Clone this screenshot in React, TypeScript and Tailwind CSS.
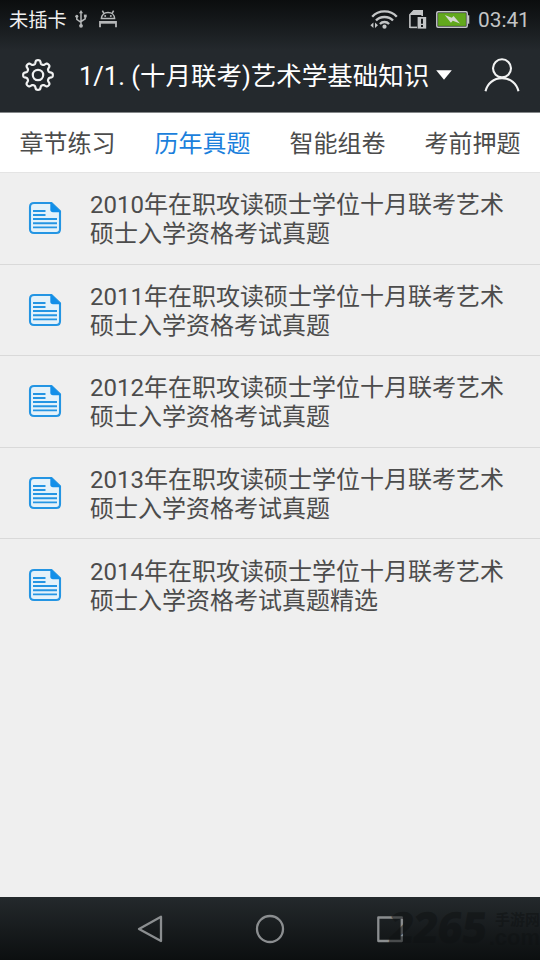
/* ── Data ──────────────────────────────────────────────────────────────── */
const TABS = ["章节练习", "历年真题", "智能组卷", "考前押题"];
const ACTIVE_TAB = "历年真题";

const PAPERS = [
  "2010年在职攻读硕士学位十月联考艺术硕士入学资格考试真题",
  "2011年在职攻读硕士学位十月联考艺术硕士入学资格考试真题",
  "2012年在职攻读硕士学位十月联考艺术硕士入学资格考试真题",
  "2013年在职攻读硕士学位十月联考艺术硕士入学资格考试真题",
  "2014年在职攻读硕士学位十月联考艺术硕士入学资格考试真题精选",
];

/* Eight soft teeth around a 32px circle */
function gearOutline(): string {
  const pts: string[] = [];
  for (let i = 0; i < 240; i++) {
    const a = (i / 240) * Math.PI * 2;
    const r = 13 + 1.9 * Math.tanh(1.9 * Math.cos(8 * a));
    pts.push(`${(16 + r * Math.cos(a)).toFixed(2)} ${(16 + r * Math.sin(a)).toFixed(2)}`);
  }
  return `M${pts.join("L")}Z`;
}

const GEAR_PATH = gearOutline();

/* ── Icons ─────────────────────────────────────────────────────────────── */
function GearIcon() {
  return (
    <svg className="size-8" viewBox="0 0 32 32" fill="none" stroke="#f1f2f2" strokeWidth="2.2">
      <path d={GEAR_PATH} strokeLinejoin="round" />
      <circle cx="16" cy="16" r="5.2" />
    </svg>
  );
}

function UserIcon() {
  return (
    <svg className="h-[34px] w-9" viewBox="0 0 36 34" fill="none" stroke="#f1f2f2" strokeWidth="2.1">
      <circle cx="18" cy="10.3" r="9" />
      <path d="M1.5 33.3C3.2 25.6 9.6 20.1 18 20.1S32.8 25.6 34.5 33.3" />
    </svg>
  );
}

function UsbIcon() {
  return (
    <svg className="h-[18px] w-3" viewBox="0 0 12 18" fill="none" stroke="#b5b7b8" strokeWidth="1.5">
      <path d="M6 2.5V15M1.8 6.5V9.3L6 12.3M10.2 6V8.8L6 11.5" />
      <path d="M6 0L8 3.2H4Z" fill="#b5b7b8" stroke="none" />
      <circle cx="6" cy="15.8" r="1.9" fill="#b5b7b8" stroke="none" />
      <circle cx="1.8" cy="6.3" r="1.5" fill="#b5b7b8" stroke="none" />
      <path d="M8.9 4.6H11.7V7.4H8.9Z" fill="#b5b7b8" stroke="none" />
    </svg>
  );
}

function AndroidIcon() {
  return (
    <svg className="h-[18px] w-[18px]" viewBox="0 0 18 18" fill="none" stroke="#b5b7b8" strokeWidth="1.5">
      <path d="M2.4 8.6C2.4 5 5.2 2.6 9 2.6S15.6 5 15.6 8.6Z" />
      <path d="M5 3.6L3.4 .6M13 3.6L14.6 .6" />
      <path d="M1 17.2V12H17V17.2" strokeWidth="1.8" />
      <path d="M1 12.8H17" strokeWidth="1.8" />
      <circle cx="6.2" cy="6.1" r="1" fill="#b5b7b8" stroke="none" />
      <circle cx="11.8" cy="6.1" r="1" fill="#b5b7b8" stroke="none" />
    </svg>
  );
}

function WifiIcon() {
  return (
    <svg className="h-[19px] w-7" viewBox="0 0 28 19" fill="none" stroke="#c3c5c6" strokeWidth="2.3">
      <path d="M2.2 6.7C8.4-.4 20.6-.4 26.8 6.7" />
      <path d="M6 10.5C10.2 5.8 18.8 5.8 23 10.5" />
      <path d="M9.9 14C12.4 11.3 16.6 11.3 19.1 14" />
      <circle cx="14.5" cy="16.7" r="2.1" fill="#c3c5c6" stroke="none" />
      <path d="M3.4 12.6V18L.4 15.3ZM5 12.6V18L8 15.3Z" fill="#c3c5c6" stroke="none" />
    </svg>
  );
}

function SimAlertIcon() {
  return (
    <svg className="h-[19px] w-[18px]" viewBox="0 0 18 19">
      <path d="M.9 18V4.8L4.7.9H13.2V6" fill="none" stroke="#c3c5c6" strokeWidth="1.6" />
      <path d="M.9 17.4H8" stroke="#c3c5c6" strokeWidth="1.6" />
      <path d="M1 4.8L4.7 1H13V5H1Z" fill="#c3c5c6" />
      <path d="M8.6 7H17.2V18.6H8.6Z" fill="#c3c5c6" />
      <path d="M12 8.8H14V13.8H12ZM12 15H14V17H12Z" fill="#171a1c" />
    </svg>
  );
}

function BatteryIcon() {
  return (
    <svg className="h-[17px] w-[34px]" viewBox="0 0 34 17">
      <rect x=".8" y=".8" width="30.4" height="15.4" rx="1.2" fill="#171a1c" stroke="#c3c5c6" strokeWidth="1.5" />
      <rect x="2.1" y="2.1" width="27.8" height="12.8" fill="#62a81d" />
      <path d="M31.5 4.3H33.3V12.7H31.5Z" fill="#c3c5c6" />
      <path d="M8.8 4L15.8 6.7L17.6 5L24 12.6L16.8 9.8L14.9 11.8Z" fill="#d4d8d0" />
    </svg>
  );
}

function PaperIcon() {
  return (
    <svg className="h-[34px] w-[34px]" viewBox="0 0 34 34">
      <path
        d="M6 2H23.5L32 10.2V28.2Q32 32 28.2 32H6Q2 32 2 28.2V6Q2 2 6 2Z"
        fill="#e4f2fa"
        stroke="#2495e3"
        strokeWidth="2.1"
      />
      <path d="M22.3 1.2L33 11.3H25Q22.3 11.3 22.3 8.6Z" fill="#128fe9" />
      <path d="M5 10H17.5M5 14H17.5M5 18H29M5 22.2H29M5 26.4H29" stroke="#2495e3" strokeWidth="1.9" />
    </svg>
  );
}

/* ── Sections ──────────────────────────────────────────────────────────── */
function StatusBar() {
  return (
    <div className="flex h-[38px] items-center pl-[9px] pr-[10px] text-[#c3c5c6]">
      <span className="pt-[3px] text-[19.3px] leading-[35px] text-[#f0f0f0]">未插卡</span>
      <span className="ml-2"><UsbIcon /></span>
      <span className="ml-3"><AndroidIcon /></span>
      <span className="ml-auto"><WifiIcon /></span>
      <span className="ml-[11px]"><SimAlertIcon /></span>
      <span className="ml-[9px]"><BatteryIcon /></span>
      <span className="ml-2 w-[52px] whitespace-nowrap pt-0.5 text-[20.8px] leading-9">03:41</span>
    </div>
  );
}

function TitleBar() {
  return (
    <div className="flex h-[74px] items-center pl-[21.5px] pr-5 text-white">
      <GearIcon />
      <h1 className="ml-[25.5px] whitespace-nowrap pt-0.5 text-[25.5px] font-normal leading-9">
        1/1. (十月联考)艺术学基础知识
      </h1>
      <svg className="ml-[7px] h-[10px] w-4" viewBox="0 0 16 10" fill="#fff">
        <path d="M.2.2H15.8L8 9.8Z" />
      </svg>
      <span className="ml-auto"><UserIcon /></span>
    </div>
  );
}

function NavBar() {
  return (
    <nav className="relative flex h-[63px] shrink-0 items-center bg-linear-to-b from-[#24292c] to-[#0c0f10]">
      <svg className="h-[63px] w-full" viewBox="0 0 540 63" fill="none" stroke="#8b8e90" strokeWidth="2.3">
        <path d="M161 19.8V44L139 31.9Z" strokeLinejoin="round" />
        <circle cx="270" cy="32" r="13" />
        <rect x="378.3" y="20.5" width="23.5" height="23.5" strokeLinejoin="round" />
      </svg>
      {/* site mark over the bar */}
      <div className="absolute right-0 top-0 flex h-[63px] items-center text-[#0f1213]/55">
        <span className="-skew-x-6 pb-1 font-['Open_Sans'] text-[43px] font-extrabold leading-none tracking-[-0.8px]">
          2265
        </span>
        <span className="flex w-[53px] flex-col items-end whitespace-nowrap pt-px">
          <span className="text-[15px] font-bold leading-4">手游网</span>
          <span className="font-['Liberation_Sans'] text-[22px] font-bold leading-[19px]">.com</span>
        </span>
      </div>
    </nav>
  );
}

export default function App() {
  return (
    <div
      lang="zh-CN"
      className="flex h-[960px] w-[540px] flex-col overflow-hidden bg-[#efefef] font-[Roboto,'Noto_Sans_CJK_SC',sans-serif]"
    >
      <header className="h-28 shrink-0 bg-[#24292d] bg-linear-to-b from-[#0b0d0e] to-[#24292d] to-45%">
        <StatusBar />
        <TitleBar />
      </header>

      <div className="grid h-[61px] shrink-0 grid-cols-4 border-b border-[#e4e4e4] border-t border-t-[#85888a] bg-white">
        {TABS.map(tab => (
          <button
            key={tab}
            className={`pt-1 text-2xl leading-[55px] ${tab === ACTIVE_TAB ? "text-[#1b7fdc]" : "text-[#4c4c4c]"}`}
          >
            {tab}
          </button>
        ))}
      </div>

      <ul className="flex-1">
        {PAPERS.map((paper, i) => (
          <li
            key={paper}
            className={`flex h-[91.5px] items-center pl-7 ${i < PAPERS.length - 1 ? "border-b border-[#d9d9d9]" : ""}`}
          >
            <PaperIcon />
            <p className="ml-7 w-[420px] break-all pt-1 text-2xl leading-[28.8px] text-[#4c4c4c]">{paper}</p>
          </li>
        ))}
      </ul>

      <NavBar />
    </div>
  );
}
